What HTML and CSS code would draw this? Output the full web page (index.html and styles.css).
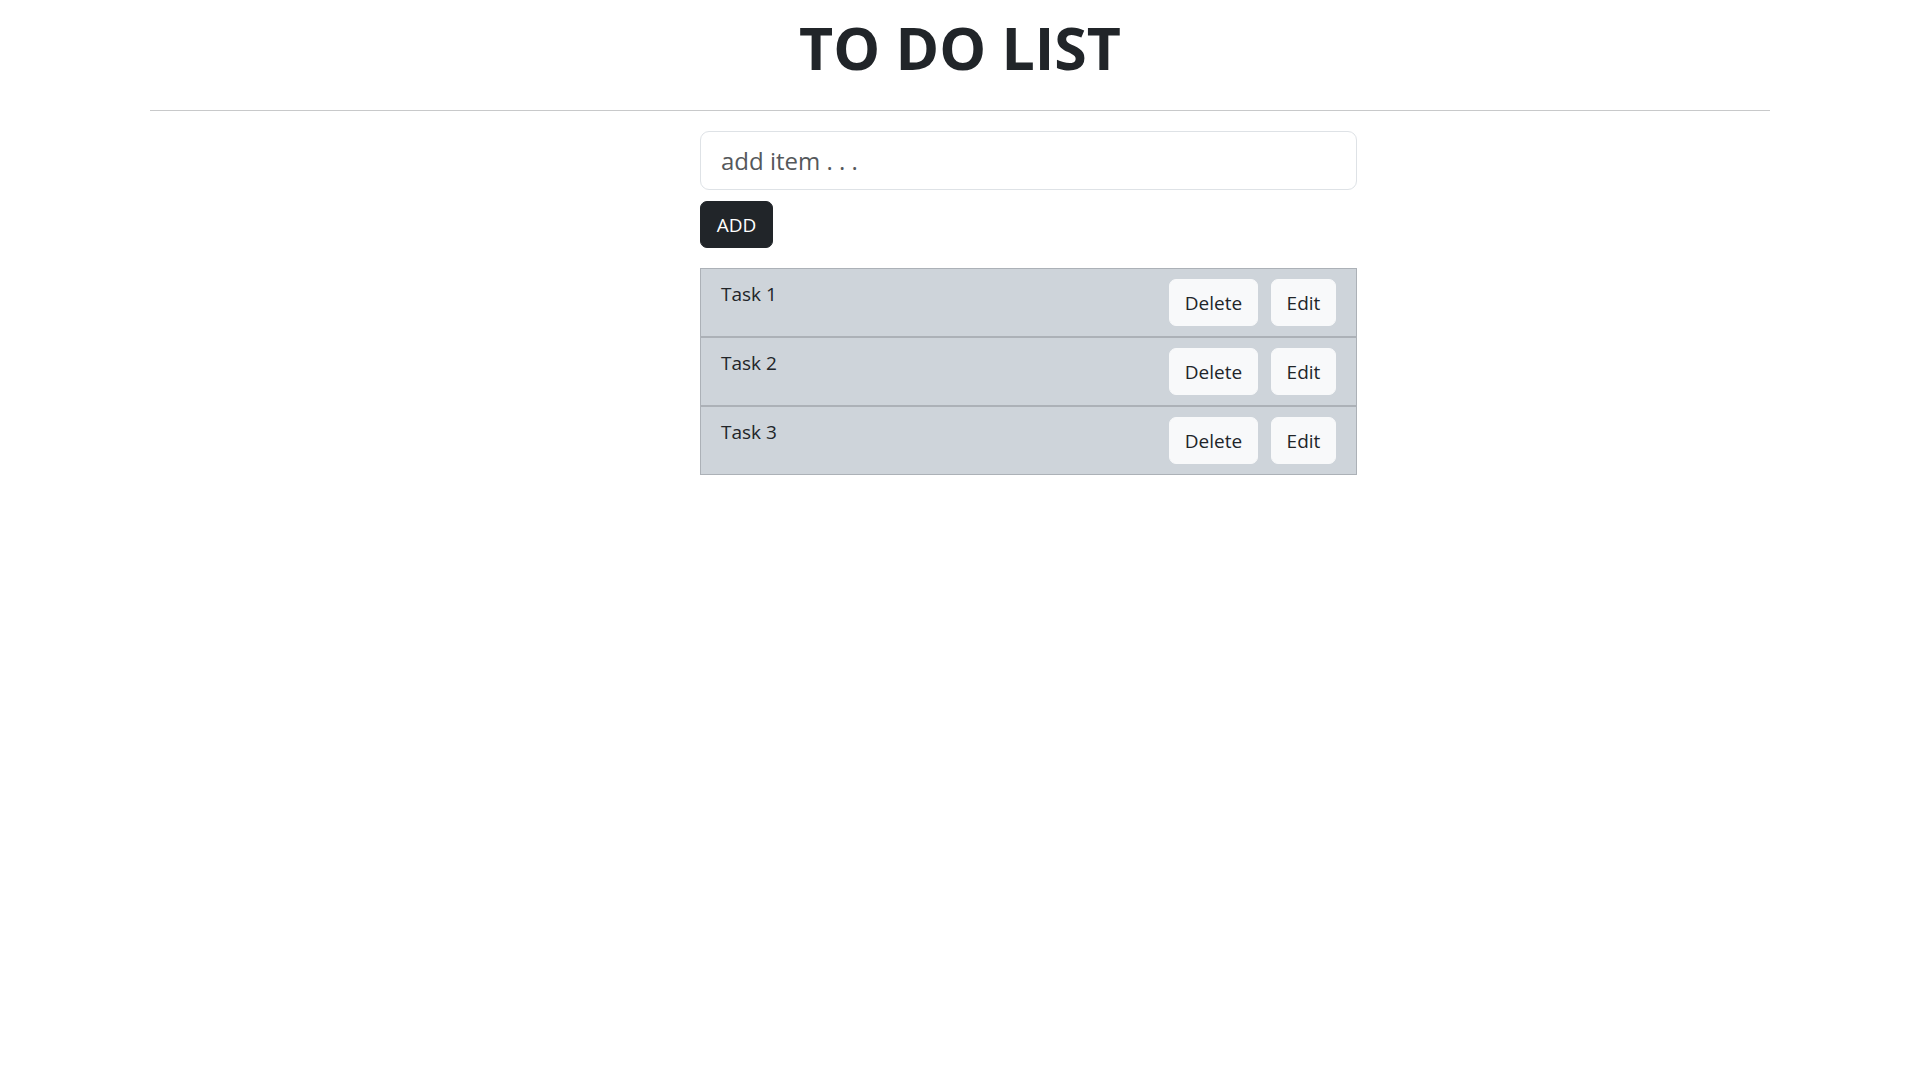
FILE: index.html
```html
<!DOCTYPE html>
<html lang="en">
<head>
<meta charset="utf-8">
<title>To Do List</title>
<link rel="stylesheet" href="styles.css">
</head>
<body>
<div class="container">
  <h1 class="title">TO DO LIST</h1>
  <hr class="divider">
  <div class="todo">
    <input class="item-input" type="text" placeholder="add item . . .">
    <button class="btn btn-dark btn-add">ADD</button>
    <ul class="task-list">
      <li class="task">
        <span class="task-name">Task 1</span>
        <div class="task-actions">
          <button class="btn btn-light btn-delete">Delete</button>
          <button class="btn btn-light btn-edit">Edit</button>
        </div>
      </li>
      <li class="task">
        <span class="task-name">Task 2</span>
        <div class="task-actions">
          <button class="btn btn-light btn-delete">Delete</button>
          <button class="btn btn-light btn-edit">Edit</button>
        </div>
      </li>
      <li class="task">
        <span class="task-name">Task 3</span>
        <div class="task-actions">
          <button class="btn btn-light btn-delete">Delete</button>
          <button class="btn btn-light btn-edit">Edit</button>
        </div>
      </li>
    </ul>
  </div>
</div>
</body>
</html>
```

FILE: styles.css
```css
* { box-sizing: border-box; }

body {
  margin: 0;
  background: #ffffff;
  color: #212529;
  font-family: "Open Sans", "Noto Sans", "Liberation Sans", sans-serif;
  font-size: 19px;
  line-height: 30px;
}

.container {
  width: 1620px;
  margin: 0 auto;
}

.title {
  margin: 11px 0 0;
  text-align: center;
  font-size: 59px;
  line-height: 72px;
  font-weight: 700;
  color: #212529;
  letter-spacing: 0;
}

.divider {
  margin: 27px 0 0;
  border: 0;
  border-top: 1px solid #c8c9ca;
  height: 0;
}

.todo {
  margin-left: 550px;
  width: 657px;
  padding-top: 20px;
}

.item-input {
  display: block;
  width: 100%;
  height: 59px;
  padding: 0 20px;
  border: 1px solid #dee2e6;
  border-radius: 9px;
  font-family: inherit;
  font-size: 24px;
  color: #212529;
  outline: none;
}

.item-input::placeholder {
  color: #55585b;
}

.btn {
  display: inline-block;
  height: 47px;
  padding: 0 15px;
  border: 1px solid transparent;
  border-radius: 7px;
  font-family: inherit;
  font-size: 19px;
  line-height: 30px;
  cursor: pointer;
}

.btn-dark {
  background: #212529;
  border-color: #212529;
  color: #ffffff;
}

.btn-add {
  margin-top: 11px;
  width: 73px;
  padding: 0;
}

.btn-light {
  background: #f8f9fa;
  border-color: #f8f9fa;
  color: #212529;
}

.btn-delete { width: 89px; padding: 0; }
.btn-edit { width: 65px; padding: 0; }

.task-list {
  list-style: none;
  margin: 20px 0 0;
  padding: 0;
}

.task {
  display: flex;
  justify-content: space-between;
  align-items: flex-start;
  padding: 10px 20px;
  background: #ced4da;
  border: 1px solid #acb1b7;
}

.task-name {
  font-size: 19px;
  line-height: 30px;
  color: #212529;
}

.task-actions {
  display: flex;
  gap: 13px;
}
```
